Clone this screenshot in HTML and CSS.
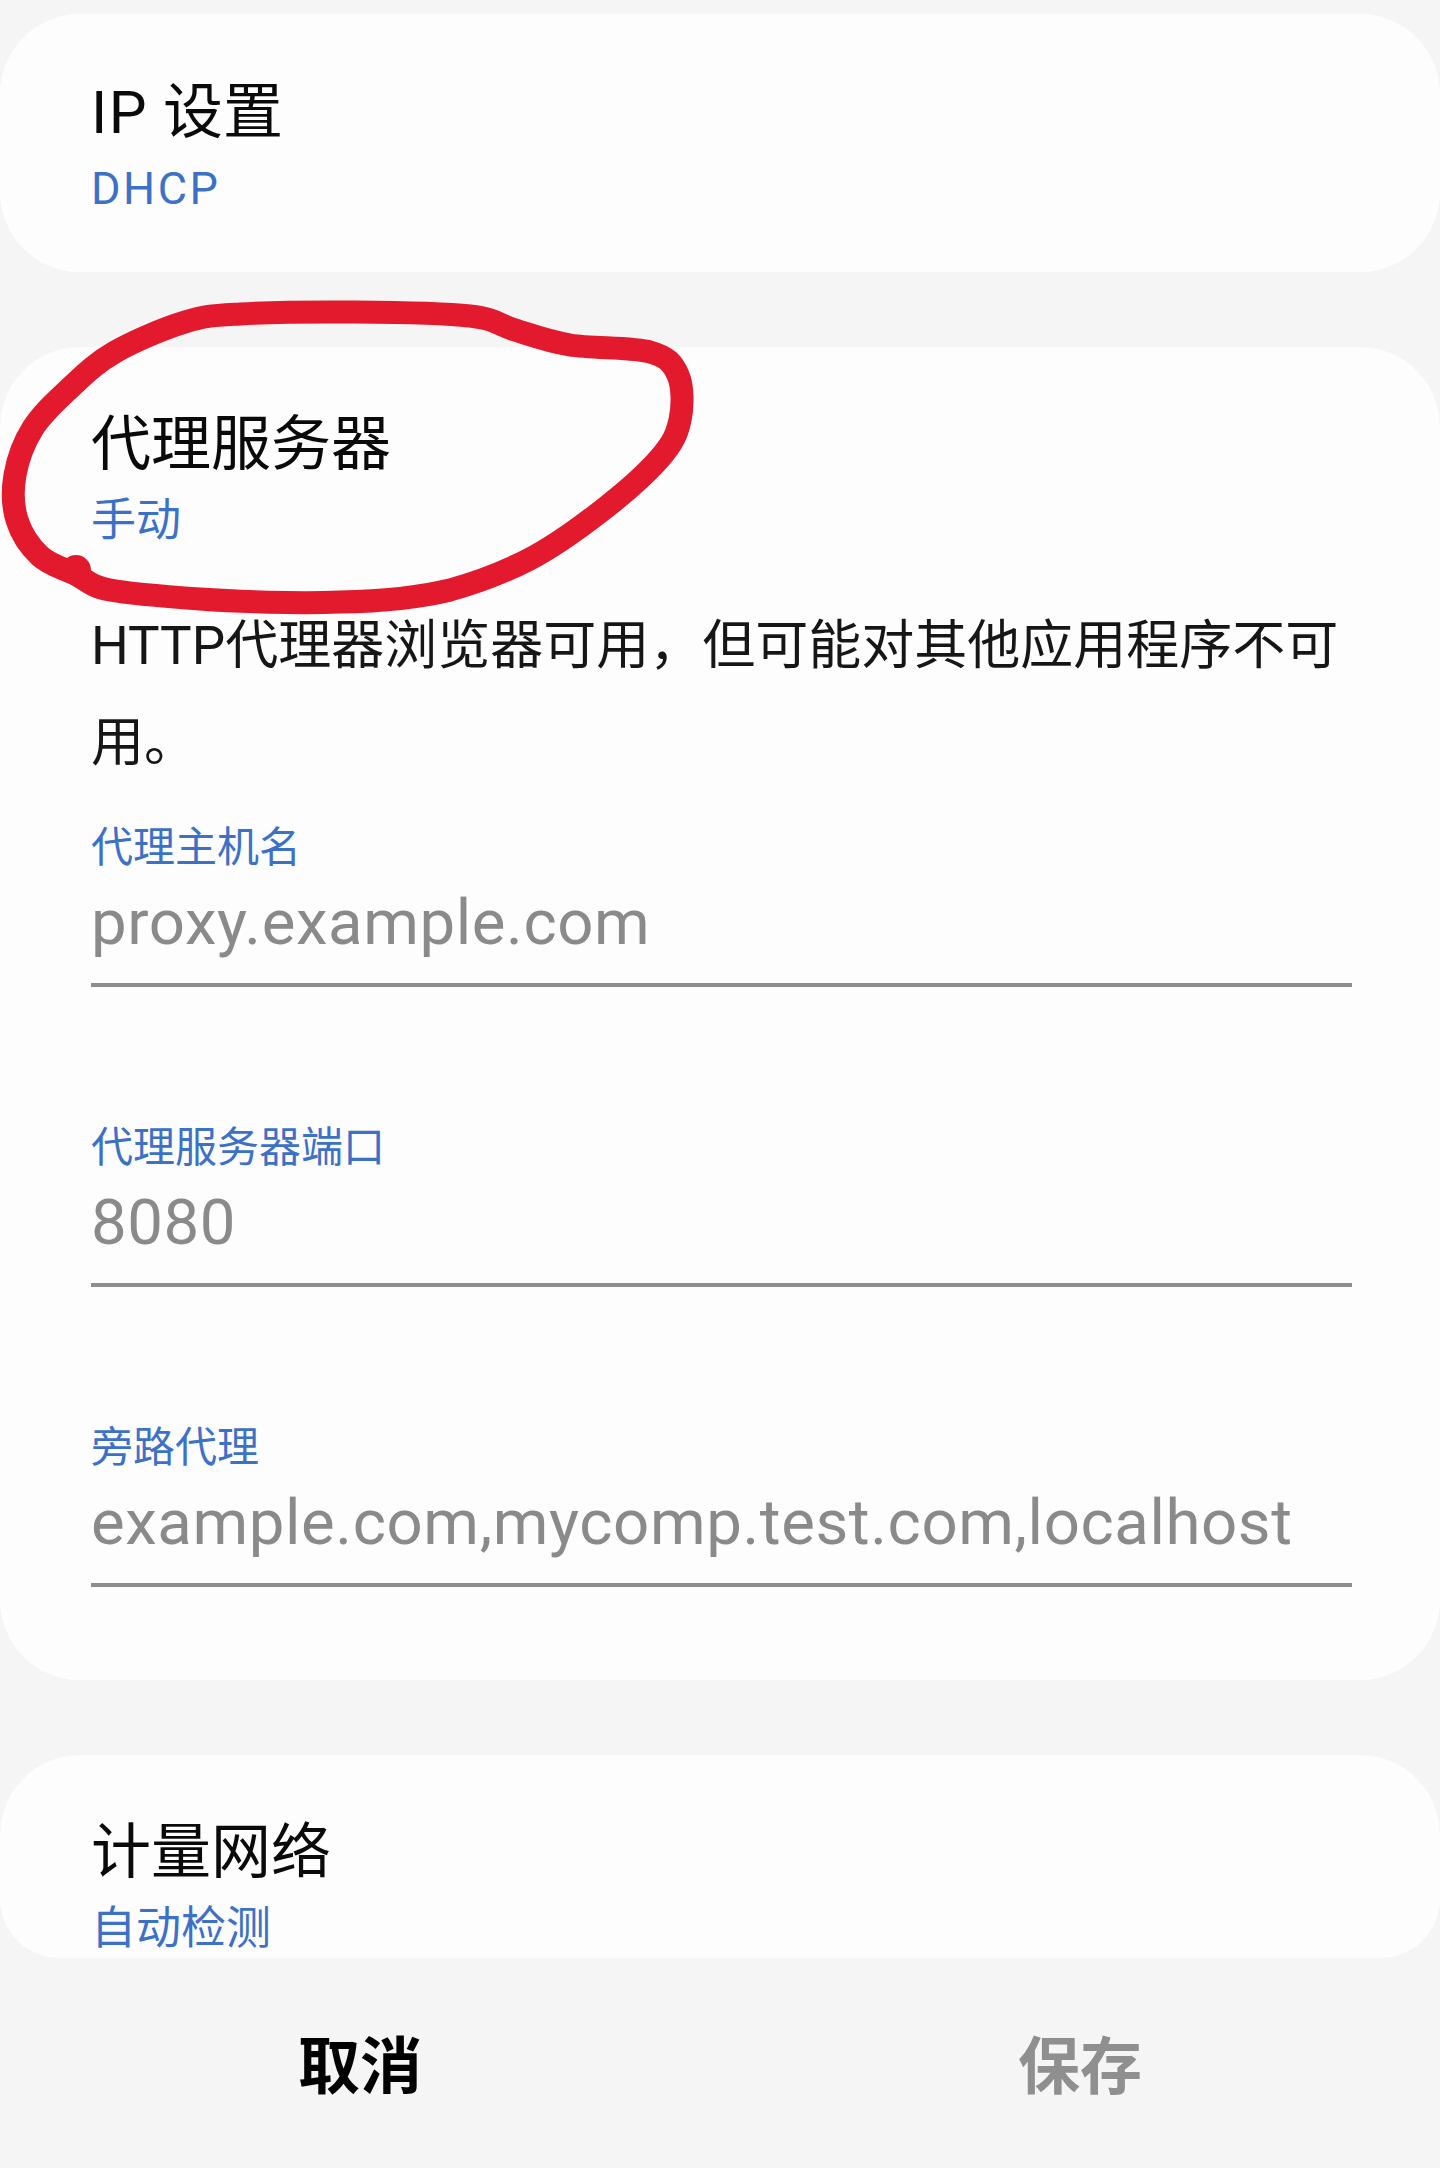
FILE: index.html
```html
<!DOCTYPE html>
<html lang="zh-CN">
<head>
<meta charset="utf-8">
<title>代理服务器设置</title>
<link rel="stylesheet" href="styles.css">
</head>
<body>
<div class="page">
  <section class="card card-ip">
    <div class="item-title"><span class="latin">IP</span> 设置</div>
    <div class="item-sub latin-sub">DHCP</div>
  </section>

  <section class="card card-proxy">
    <div class="item-title">代理服务器</div>
    <div class="item-sub">手动</div>
    <p class="desc">HTTP代理器浏览器可用，但可能对其他应用程序不可用。</p>

    <div class="field field-first">
      <div class="field-label">代理主机名</div>
      <div class="field-input">proxy.example.com</div>
    </div>
    <div class="field">
      <div class="field-label">代理服务器端口</div>
      <div class="field-input">8080</div>
    </div>
    <div class="field">
      <div class="field-label">旁路代理</div>
      <div class="field-input">example.com,mycomp.test.com,localhost</div>
    </div>
  </section>

  <section class="card card-metered">
    <div class="item-title">计量网络</div>
    <div class="item-sub">自动检测</div>
  </section>

  <div class="bottom-bar">
    <div class="btn btn-cancel">取消</div>
    <div class="btn btn-save">保存</div>
  </div>

  <svg class="annotation" width="720" height="640" viewBox="0 0 720 640" aria-hidden="true">
    <path d="M 75 574 C 63.3 568.3, 49.7 565, 40 556 C 30.3 547, 21.2 533.5, 17 520 C 12.8 506.5, 12.3 490.3, 15 475 C 17.7 459.7, 23.8 442.5, 33 428 C 42.2 413.5, 56.3 400.7, 70 388 C 83.7 375.3, 95.8 363, 115 352 C 134.2 341, 164.2 328.3, 185 322 C 205.8 315.7, 211.7 315.7, 240 314 C 268.3 312.3, 316.7 311.7, 355 312 C 393.3 312.3, 443.3 313, 470 316 C 496.7 319, 498.3 324.8, 515 330 C 531.7 335.2, 547.5 341.3, 570 345 C 592.5 348.7, 632 347, 650 352 C 668 357, 673 363.7, 678 375 C 683 386.3, 683 406.2, 680 420 C 677 433.8, 673.3 442.7, 660 458 C 646.7 473.3, 622 495, 600 512 C 578 529, 553 547.3, 528 560 C 503 572.7, 481.3 581.3, 450 590 C 418.7 597.7, 381.7 601.3, 340 602 C 298.3 603.7, 238.3 601.7, 200 599 C 161.7 596.3, 130.8 594, 110 590 C 89.2 586, 86.7 579.7, 75 574 C 63.3 568.3, 49.7 565, 40 556" />
    <circle cx="76" cy="570" r="15" />
  </svg>
</div>
</body>
</html>
```

FILE: styles.css
```css
html, body {
  margin: 0;
  padding: 0;
}

body {
  background: #f5f5f5;
  font-family: Roboto, "Noto Sans CJK SC", "Noto Sans", sans-serif;
  color: #111;
}

.page {
  position: relative;
  width: 1440px;
  height: 2168px;
  overflow: hidden;
  padding-top: 14px;
  box-sizing: border-box;
  display: flex;
  flex-direction: column;
}

.card {
  background: #fdfdfd;
  border-radius: 80px;
  box-sizing: border-box;
  padding: 62px 88px 0 91px;
  overflow: hidden;
  flex: none;
}

.card-ip {
  height: 258px;
  padding-top: 63px;
  margin-bottom: 75px;
}

.card-proxy {
  height: 1333px;
  margin-bottom: 75px;
}

.card-metered {
  height: 203px;
  border-radius: 80px 80px 60px 60px;
}

.item-title {
  font-size: 60px;
  line-height: 72px;
  color: #0a0a0a;
}

.latin {
  letter-spacing: 1.5px;
}

.item-sub {
  font-size: 45px;
  line-height: 60px;
  margin-top: 10px;
  color: #3d71c5;
}

.latin-sub {
  letter-spacing: 2.5px;
}

.desc {
  margin: 47px 0 0 0;
  font-size: 53px;
  line-height: 97px;
  color: #161616;
}

.field {
  margin-top: 136px;
}

.field-first {
  margin-top: 31px;
}

.field-label {
  font-size: 42px;
  line-height: 50px;
  color: #3d71c5;
}

.field-input {
  margin-top: 12px;
  font-size: 63.5px;
  line-height: 76px;
  letter-spacing: 0.6px;
  color: #8a8a8a;
  padding-bottom: 22px;
  border-bottom: 4px solid #8e8e8e;
  white-space: nowrap;
}

.bottom-bar {
  flex: 1;
  display: flex;
  align-items: center;
  padding-bottom: 2px;
}

.btn {
  flex: 1;
  text-align: center;
  font-size: 62px;
  line-height: 80px;
  font-weight: 700;
  font-family: "Noto Sans CJK SC", sans-serif;
}

.btn-cancel {
  color: #000;
}

.btn-save {
  color: #8f8f8f;
}

.annotation {
  position: absolute;
  left: 0;
  top: 0;
  pointer-events: none;
}

.annotation path {
  fill: none;
  stroke: #e31a2e;
  stroke-width: 23;
  stroke-linecap: round;
  stroke-linejoin: round;
}

.annotation circle {
  fill: #e31a2e;
}
```
